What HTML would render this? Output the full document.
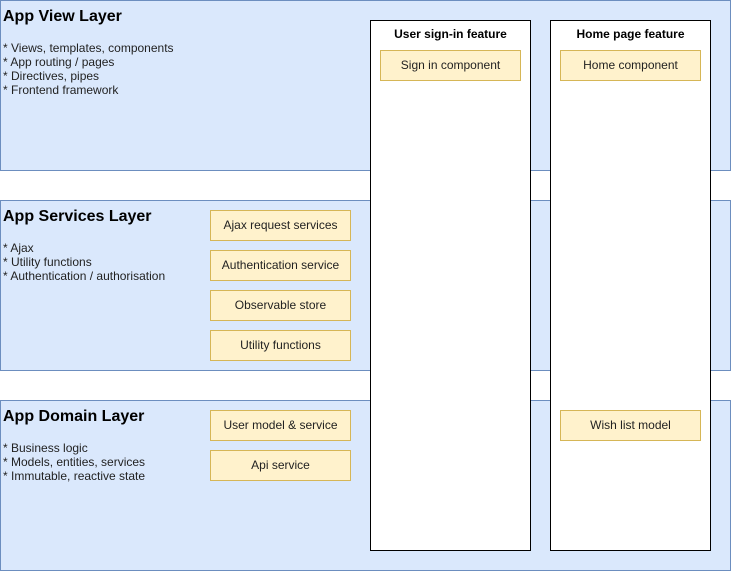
<!DOCTYPE html>
<html><head><style>
body{margin:0;width:731px;height:571px;position:relative;background:#fff;font-family:"Liberation Sans",Arial,sans-serif;overflow:hidden}
.b{position:absolute;box-sizing:border-box}
.layer{background:#dae8fc;border:1px solid #6c8ebf;left:0;width:731px;height:171px}
.t{position:absolute;left:2px;top:7px;font-weight:bold;font-size:16px;color:#000}
.l{position:absolute;left:2px;top:40px;font-size:12px;line-height:14px;color:#222}
.y{background:#fff2cc;border:1px solid #d6b656;width:141px;height:31px;font-size:12px;text-align:center;line-height:29px;color:#222}
.f{background:#fff;border:1px solid #000;width:161px;height:531px;top:20px}
.fh{position:absolute;top:6px;width:100%;text-align:center;font-weight:bold;font-size:12px}
</style></head><body>
<div class="b layer" style="top:0"><div class="t">App View Layer</div><div class="l">* Views, templates, components<br>* App routing / pages<br>* Directives, pipes<br>* Frontend framework</div></div>
<div class="b layer" style="top:200px"><div class="t">App Services Layer</div><div class="l">* Ajax<br>* Utility functions<br>* Authentication / authorisation</div></div>
<div class="b layer" style="top:400px"><div class="t">App Domain Layer</div><div class="l">* Business logic<br>* Models, entities, services<br>* Immutable, reactive state</div></div>
<div class="b y" style="left:210px;top:210px">Ajax request services</div>
<div class="b y" style="left:210px;top:250px">Authentication service</div>
<div class="b y" style="left:210px;top:290px">Observable store</div>
<div class="b y" style="left:210px;top:330px">Utility functions</div>
<div class="b y" style="left:210px;top:410px">User model &amp; service</div>
<div class="b y" style="left:210px;top:450px">Api service</div>
<div class="b f" style="left:370px"><div class="fh">User sign-in feature</div></div>
<div class="b f" style="left:550px"><div class="fh">Home page feature</div></div>
<div class="b y" style="left:380px;top:50px">Sign in component</div>
<div class="b y" style="left:560px;top:50px">Home component</div>
<div class="b y" style="left:560px;top:410px">Wish list model</div>
</body></html>
